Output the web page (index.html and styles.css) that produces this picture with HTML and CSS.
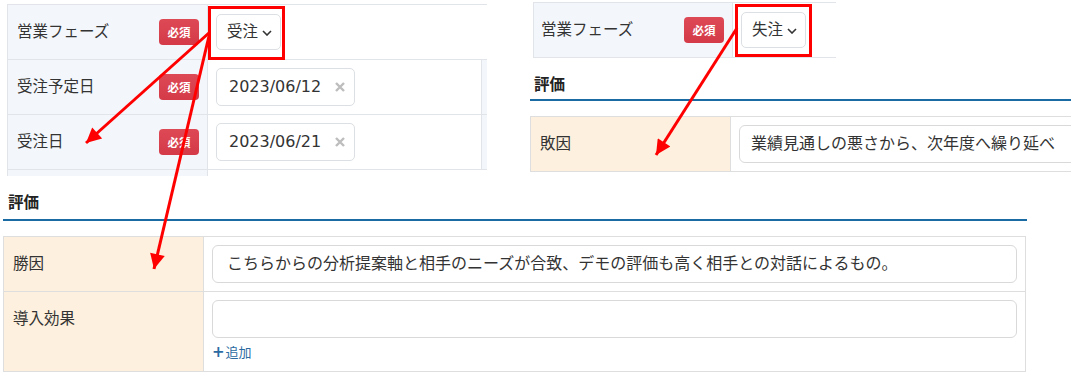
FILE: index.html
```html
<!doctype html>
<html lang="ja">
 <head>
  <meta charset="UTF-8">
  <title>営業フェーズと評価</title>
  <link rel="stylesheet" href="styles.css">
 </head>
 <body>
  <div class="canvas">
   <div class="top">
    <!-- 受注のケース -->
    <section class="shot shot-a">
     <div class="row">
      <div class="label"><span>営業フェーズ</span><span class="req">必須</span></div>
      <div class="value">
       <div class="select">受注<svg class="chev" width="10" height="6" viewBox="0 0 10 6"><path d="M1 1l4 4 4-4" fill="none" stroke="#333" stroke-width="1.6"/></svg></div>
      </div>
     </div>
     <div class="row">
      <div class="label"><span>受注予定日</span><span class="req">必須</span></div>
      <div class="value bordered">
       <div class="date">2023/06/12<svg class="clear" width="10" height="10" viewBox="0 0 10 10"><path d="M1 1l8 8M9 1l-8 8" stroke="#bdbdbd" stroke-width="2.4"/></svg></div>
      </div>
      <div class="next"></div>
     </div>
     <div class="row">
      <div class="label"><span>受注日</span><span class="req">必須</span></div>
      <div class="value bordered">
       <div class="date">2023/06/21<svg class="clear" width="10" height="10" viewBox="0 0 10 10"><path d="M1 1l8 8M9 1l-8 8" stroke="#bdbdbd" stroke-width="2.4"/></svg></div>
      </div>
      <div class="next"></div>
     </div>
     <div class="row stub">
      <div class="label"></div>
      <div class="value"></div>
     </div>
    </section>

    <!-- 失注のケース -->
    <section class="shot shot-b">
     <div class="row phase">
      <div class="label"><span>営業フェーズ</span><span class="req">必須</span></div>
      <div class="value">
       <div class="select">失注<svg class="chev" width="10" height="6" viewBox="0 0 10 6"><path d="M1 1l4 4 4-4" fill="none" stroke="#333" stroke-width="1.6"/></svg></div>
      </div>
     </div>
     <h3 class="sec-title">評価</h3>
     <div class="eval">
      <div class="erow">
       <div class="elabel">敗因</div>
       <div class="evalue"><div class="field wide">業績見通しの悪さから、次年度へ繰り延べ</div></div>
      </div>
     </div>
    </section>
   </div>

   <section class="shot shot-c">
    <h3 class="sec-title">評価</h3>
    <div class="eval">
     <div class="erow">
      <div class="elabel">勝因</div>
      <div class="evalue"><div class="field">こちらからの分析提案軸と相手のニーズが合致、デモの評価も高く相手との対話によるもの。</div></div>
     </div>
     <div class="erow">
      <div class="elabel">導入効果</div>
      <div class="evalue">
       <div class="field"></div>
       <a class="add" href="#"><b>+</b>追加</a>
      </div>
     </div>
    </div>
   </section>

   <svg class="marks" width="1071" height="380" viewBox="0 0 1071 380">
    <defs>
     <marker id="head" viewBox="0 0 10 10" refX="10" refY="5" markerWidth="18" markerHeight="15" markerUnits="userSpaceOnUse" orient="auto">
      <path d="M0 0L10 5L0 10z" fill="#f00"/>
     </marker>
    </defs>
    <rect x="209.5" y="7.5" width="74" height="51" fill="none" stroke="#f00" stroke-width="3"/>
    <rect x="736.5" y="5.5" width="74" height="50" fill="none" stroke="#f00" stroke-width="3"/>
    <line x1="210" y1="32" x2="86" y2="143" stroke="#f00" stroke-width="3" marker-end="url(#head)"/>
    <line x1="209" y1="36" x2="154" y2="269" stroke="#f00" stroke-width="3" marker-end="url(#head)"/>
    <line x1="737" y1="28" x2="656" y2="155" stroke="#f00" stroke-width="3" marker-end="url(#head)"/>
   </svg>
  </div>
 </body>
</html>
```

FILE: styles.css
```css
* {
  box-sizing: border-box;
}

body {
  margin: 0;
  background: #fff;
  color: #333;
  font-family: "DejaVu Sans", "Noto Sans CJK JP", sans-serif;
  font-size: 15.5px;
  line-height: 20px;
}

.canvas {
  position: relative;
  width: 1071px;
  height: 380px;
  overflow: hidden;
}

.top {
  display: flex;
  align-items: flex-start;
  height: 180px;
}

/* form rows (営業フェーズ etc.) */
.shot-a {
  flex: none;
  width: 480px;
  margin: 4px 0 0 7px;
  border-left: 1px solid #e1e4e8;
  border-top: 1px solid #e1e4e8;
}

.row {
  display: flex;
  height: 55px;
  border-bottom: 1px solid #e1e4e8;
}

.row.stub {
  height: 6px;
  border-bottom: none;
}

.label {
  width: 200px;
  flex: none;
  display: flex;
  align-items: center;
  justify-content: space-between;
  padding: 0 8px 0 9px;
  background: #f3f7fb;
  border-right: 1px solid #e1e4e8;
}

.value {
  flex: 1;
  display: flex;
  align-items: center;
  padding-left: 8px;
}

.value.bordered {
  border-right: 1px solid #e1e4e8;
}

.next {
  width: 5px;
  background: #f3f7fb;
}

.req {
  width: 40px;
  height: 26px;
  border-radius: 4px;
  background: linear-gradient(#de4956, #d43a48);
  color: #fff;
  font-family: "Noto Sans CJK JP", sans-serif;
  font-size: 11.5px;
  font-weight: 700;
  line-height: 26px;
  text-align: center;
}

.select {
  display: flex;
  align-items: center;
  width: 65px;
  height: 36px;
  padding-left: 10px;
  border: 1px solid #dcdfe3;
  border-radius: 5px;
  background: #fff;
}

.chev {
  margin-left: 4px;
  margin-top: 2px;
}

.date {
  display: flex;
  align-items: center;
  width: 139px;
  height: 38px;
  padding-left: 12px;
  border: 1px solid #dcdfe3;
  border-radius: 5px;
  font-size: 16px;
}

.clear {
  margin-left: 14px;
}

/* 失注 panel */
.shot-b {
  flex: none;
  width: 541px;
  margin-left: 43px;
}

.row.phase {
  width: 303px;
  height: 56px;
  margin: 2px 0 0 3px;
  border-top: 1px solid #e1e4e8;
  border-left: 1px solid #e1e4e8;
}

.row.phase .label {
  width: 199px;
  padding-left: 7px;
}

.sec-title {
  margin: 0;
  padding: 17px 0 4px 4px;
  font-size: 15.5px;
  font-weight: 700;
  line-height: 20px;
  color: #222;
  border-bottom: 2px solid #1a6aa3;
}

.eval {
  margin-top: 15px;
  border: 1px solid #dedede;
}

.shot-b .eval {
  width: 600px;
}

.erow {
  display: flex;
}

.erow + .erow {
  border-top: 1px solid #dedede;
}

.elabel {
  width: 200px;
  flex: none;
  padding: 17px 0 0 9px;
  background: #fdf0de;
  border-right: 1px solid #dedede;
}

.evalue {
  flex: 1;
  padding: 8px 8px 8px 8px;
}

.field {
  height: 38px;
  padding-left: 14px;
  border: 1px solid #d9d9d9;
  border-radius: 6px;
  font-size: 16px;
  line-height: 36px;
  white-space: nowrap;
  overflow: hidden;
}

.field.wide {
  width: 400px;
  padding-left: 11px;
}

.add {
  display: block;
  margin-top: 6px;
  margin-bottom: 3px;
  color: #2c6ba1;
  font-family: "Noto Sans CJK JP", sans-serif;
  font-size: 13px;
  line-height: 16px;
  text-decoration: none;
}

.add b {
  font-family: "DejaVu Sans", sans-serif;
  font-size: 15px;
  margin-right: 1px;
}

/* 勝因 panel */
.shot-c {
  width: 1024px;
  margin-left: 3px;
}

.shot-c .sec-title {
  padding: 13px 0 6px 5px;
}

.shot-c .eval {
  margin-right: 1px;
}

.marks {
  position: absolute;
  top: 0;
  left: 0;
  pointer-events: none;
}
```
